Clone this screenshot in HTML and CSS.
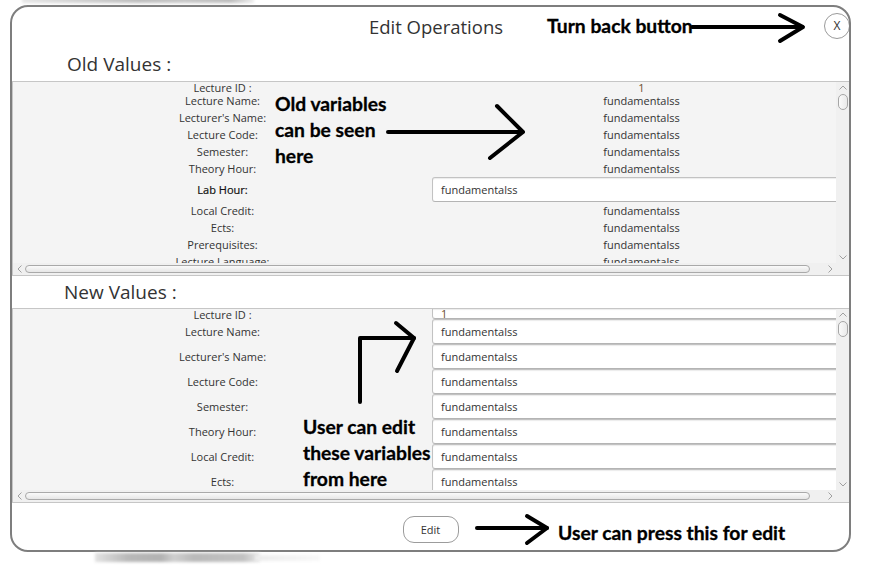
FILE: index.html
```html
<!DOCTYPE html>
<html>
<head>
<meta charset="utf-8">
<title>Edit Operations</title>
<link rel="stylesheet" href="styles.css">
</head>
<body>
<div class="smudge smudge-top"></div>
<div class="window">
  <div class="header">
    <div class="title">Edit Operations</div>
    <button class="close">X</button>
  </div>

  <div class="section-label old-label">Old Values :</div>
  <div class="scrollpane">
    <div class="sp-main">
      <div class="viewport">
        <div class="grid old-grid">
          <div class="lbl">Lecture ID :</div><div class="val val-id">1</div>
          <div class="lbl">Lecture Name:</div><div class="val">fundamentalss</div>
          <div class="lbl">Lecturer's Name:</div><div class="val">fundamentalss</div>
          <div class="lbl">Lecture Code:</div><div class="val">fundamentalss</div>
          <div class="lbl">Semester:</div><div class="val">fundamentalss</div>
          <div class="lbl">Theory Hour:</div><div class="val">fundamentalss</div>
          <div class="lbl lbl-strong">Lab Hour:</div><div class="cell"><div class="field">fundamentalss</div></div>
          <div class="lbl">Local Credit:</div><div class="val">fundamentalss</div>
          <div class="lbl">Ects:</div><div class="val">fundamentalss</div>
          <div class="lbl">Prerequisites:</div><div class="val">fundamentalss</div>
          <div class="lbl">Lecture Language:</div><div class="val">fundamentalss</div>
        </div>
      </div>
      <div class="vscroll">
        <div class="varrow"><svg width="8" height="5" viewBox="0 0 8 5"><polyline points="0.5,4.5 4,1 7.5,4.5" fill="none" stroke="#a0a0a0" stroke-width="1"/></svg></div>
        <div class="vthumb"></div>
        <div class="vspace"></div>
        <div class="varrow"><svg width="8" height="5" viewBox="0 0 8 5"><polyline points="0.5,0.5 4,4 7.5,0.5" fill="none" stroke="#a0a0a0" stroke-width="1"/></svg></div>
      </div>
    </div>
    <div class="hscroll">
      <div class="harrow"><svg width="5" height="8" viewBox="0 0 5 8"><polyline points="4.5,0.5 1,4 4.5,7.5" fill="none" stroke="#a0a0a0" stroke-width="1"/></svg></div>
      <div class="htrack"><div class="hthumb"></div></div>
      <div class="harrow"><svg width="5" height="8" viewBox="0 0 5 8"><polyline points="0.5,0.5 4,4 0.5,7.5" fill="none" stroke="#a0a0a0" stroke-width="1"/></svg></div>
      <div class="corner"></div>
    </div>
  </div>

  <div class="section-label new-label">New Values :</div>
  <div class="scrollpane">
    <div class="sp-main">
      <div class="viewport">
        <div class="grid new-grid">
          <div class="lbl">Lecture ID :</div><div class="cell"><div class="field field-id">1</div></div>
          <div class="lbl">Lecture Name:</div><div class="cell"><div class="field">fundamentalss</div></div>
          <div class="lbl">Lecturer's Name:</div><div class="cell"><div class="field">fundamentalss</div></div>
          <div class="lbl">Lecture Code:</div><div class="cell"><div class="field">fundamentalss</div></div>
          <div class="lbl">Semester:</div><div class="cell"><div class="field">fundamentalss</div></div>
          <div class="lbl">Theory Hour:</div><div class="cell"><div class="field">fundamentalss</div></div>
          <div class="lbl">Local Credit:</div><div class="cell"><div class="field">fundamentalss</div></div>
          <div class="lbl">Ects:</div><div class="cell"><div class="field">fundamentalss</div></div>
        </div>
      </div>
      <div class="vscroll">
        <div class="varrow"><svg width="8" height="5" viewBox="0 0 8 5"><polyline points="0.5,4.5 4,1 7.5,4.5" fill="none" stroke="#a0a0a0" stroke-width="1"/></svg></div>
        <div class="vthumb"></div>
        <div class="vspace"></div>
        <div class="varrow"><svg width="8" height="5" viewBox="0 0 8 5"><polyline points="0.5,0.5 4,4 7.5,0.5" fill="none" stroke="#a0a0a0" stroke-width="1"/></svg></div>
      </div>
    </div>
    <div class="hscroll">
      <div class="harrow"><svg width="5" height="8" viewBox="0 0 5 8"><polyline points="4.5,0.5 1,4 4.5,7.5" fill="none" stroke="#a0a0a0" stroke-width="1"/></svg></div>
      <div class="htrack"><div class="hthumb"></div></div>
      <div class="harrow"><svg width="5" height="8" viewBox="0 0 5 8"><polyline points="0.5,0.5 4,4 0.5,7.5" fill="none" stroke="#a0a0a0" stroke-width="1"/></svg></div>
      <div class="corner"></div>
    </div>
  </div>

  <div class="footer">
    <button class="edit-btn">Edit</button>
  </div>
</div>
<div class="smudge smudge-bottom"></div>
<div class="smudge smudge-bottom2"></div>

<svg class="arrows" width="870" height="578" viewBox="0 0 870 578">
  <g fill="none" stroke="#000" stroke-width="4" stroke-linecap="round" stroke-linejoin="round">
    <path d="M692 27 L802 27"/>
    <path d="M780 15 L803 27 L780 41"/>
    <path d="M388 132 L522 132"/>
    <path d="M497 106 L523 132 L490 158"/>
    <path d="M360 402 L360 338 L414 338"/>
    <path d="M396 323 L414 338 L397 371"/>
    <path d="M477 528 L547 528"/>
    <path d="M527 516 L547 528 L527 543"/>
  </g>
</svg>
<div class="note note-back">Turn back button</div>
<div class="note note-old">Old variables<br>can be seen<br>here</div>
<div class="note note-new">User can edit<br>these variables<br>from here</div>
<div class="note note-edit">User can press this for edit</div>
</body>
</html>
```

FILE: styles.css
```css
* { box-sizing: border-box; }

html, body {
  margin: 0;
  padding: 0;
}

body {
  width: 870px;
  height: 578px;
  overflow: hidden;
  position: relative;
  background: #ffffff;
  font-family: "Open Sans", "Noto Sans", sans-serif;
  color: #333333;
}

.window {
  margin: 5px 0 0 10px;
  width: 841px;
  height: 547px;
  border: 2px solid #7e7e7e;
  border-radius: 18px;
  background: #ffffff;
  display: flex;
  flex-direction: column;
  overflow: hidden;
}

/* header */
.header {
  height: 41px;
  flex: none;
  display: flex;
  align-items: flex-start;
}

.title {
  flex: 1;
  text-align: center;
  padding-left: 36px;
  font-size: 18.5px;
  line-height: 40px;
  color: #333;
}

.close {
  width: 26px;
  height: 26px;
  margin-top: 6px;
  margin-right: -1px;
  border: 1px solid #9a9a9a;
  border-radius: 50%;
  background: #ffffff;
  font-family: "Open Sans", sans-serif;
  font-size: 12px;
  color: #333;
  padding: 0;
  line-height: 24px;
  text-align: center;
}

/* section labels */
.section-label {
  flex: none;
  font-size: 19px;
  color: #333;
}

.old-label {
  height: 33px;
  line-height: 33px;
  padding-left: 55px;
}

.new-label {
  height: 32px;
  line-height: 32px;
  padding-left: 52px;
}

/* scroll panes */
.scrollpane {
  flex: none;
  height: 195px;
  border-top: 1px solid #c6c6c6;
  border-bottom: 1px solid #c6c6c6;
  border-left: 1px solid #c6c6c6;
  background: #f4f4f4;
  display: flex;
  flex-direction: column;
}

.sp-main {
  flex: 1;
  display: flex;
  min-height: 0;
}

.viewport {
  flex: 1;
  overflow: hidden;
  position: relative;
}

.grid {
  display: grid;
  grid-template-columns: 419px 419px;
  width: 838px;
}

.old-grid {
  grid-template-rows: 10px repeat(5, 17px) 25px repeat(4, 17px);
}

.new-grid {
  grid-template-rows: 10px repeat(7, 25px);
}

.lbl, .val {
  display: flex;
  align-items: center;
  justify-content: center;
  font-size: 11px;
  white-space: nowrap;
  color: #333;
  overflow: visible;
}

.lbl-strong {
  color: #111;
  -webkit-text-stroke: 0.2px #111;
}

.val-id {
  color: #6b4e2e;
}

.cell {
  display: flex;
  align-items: stretch;
  min-width: 0;
}

.field {
  flex: 1;
  height: 25px;
  border: 1px solid #c2c2c2;
  border-bottom-color: #b4b4b4;
  border-radius: 3px;
  background: #ffffff;
  box-shadow: inset 0 1px 1px #ececec;
  padding-left: 8px;
  font-size: 11px;
  line-height: 23px;
  color: #333;
  white-space: nowrap;
}

.field-id {
  height: 10px;
  line-height: 9px;
  border-top: none;
  border-radius: 0 0 3px 3px;
  color: #6b4e2e;
  overflow: hidden;
}

/* vertical scrollbar */
.vscroll {
  width: 13px;
  flex: none;
  background: #f0f0f0;
  display: flex;
  flex-direction: column;
  align-items: center;
}

.varrow {
  height: 11px;
  flex: none;
  display: flex;
  align-items: center;
  justify-content: center;
}

.vthumb {
  width: 10px;
  height: 16px;
  margin-top: 1px;
  flex: none;
  border: 1px solid #a6a6a6;
  border-radius: 5px;
  background: linear-gradient(to right, #fafafa, #e9e9e9);
}

.vspace {
  flex: 1;
}

/* horizontal scrollbar */
.hscroll {
  height: 12px;
  flex: none;
  display: flex;
  background: #f0f0f0;
}

.harrow {
  width: 12px;
  flex: none;
  display: flex;
  align-items: center;
  justify-content: center;
}

.htrack {
  flex: 1;
  padding: 2px 14px 2px 0;
  display: flex;
}

.hthumb {
  flex: 1;
  border: 1px solid #a9a9a9;
  border-radius: 4px;
  background: linear-gradient(to bottom, #fafafa, #e6e6e6);
}

.corner {
  width: 13px;
  flex: none;
  background: #f0f0f0;
}

/* footer */
.footer {
  flex: 1;
  display: flex;
  justify-content: center;
  align-items: flex-start;
  padding-top: 13px;
}

.edit-btn {
  width: 56px;
  height: 27px;
  border: 1px solid #9c9c9c;
  border-radius: 11px;
  background: #ffffff;
  font-family: "Open Sans", sans-serif;
  font-size: 11px;
  color: #333;
  padding: 0;
}

/* blurred capture artefacts */
.smudge {
  position: absolute;
  filter: blur(1.5px);
  pointer-events: none;
}

.smudge-top {
  left: 22px;
  top: -3px;
  width: 232px;
  height: 6px;
  background: linear-gradient(to right, #e6e6e6, #c9c9c9 35%, #bdbdbd 50%, #c6c6c6 70%, #bcbcbc 90%, #eeeeee);
}

.smudge-bottom {
  left: 95px;
  top: 553px;
  width: 165px;
  height: 9px;
  background: linear-gradient(to right, #e2e2e2, #b8b8b8 20%, #b2b2b2 40%, #cfcfcf 48%, #b9b9b9 60%, #c2c2c2 90%, #e8e8e8);
}

.smudge-bottom2 {
  left: 255px;
  top: 555px;
  width: 65px;
  height: 6px;
  background: linear-gradient(to right, #ececec, #f8f8f8);
}

/* annotations drawn over the screenshot */
.arrows {
  position: absolute;
  left: 0;
  top: 0;
  pointer-events: none;
}

.note {
  position: absolute;
  font-family: "Lato", "Liberation Sans", sans-serif;
  font-weight: 700;
  font-size: 19.3px;
  line-height: 26px;
  color: #000;
  -webkit-text-stroke: 0.3px #000;
  white-space: nowrap;
}

.note-back { left: 547px; top: 13px; }
.note-old  { left: 275px; top: 91px; }
.note-new  { left: 303px; top: 414px; }
.note-edit { left: 558px; top: 520px; }
```
